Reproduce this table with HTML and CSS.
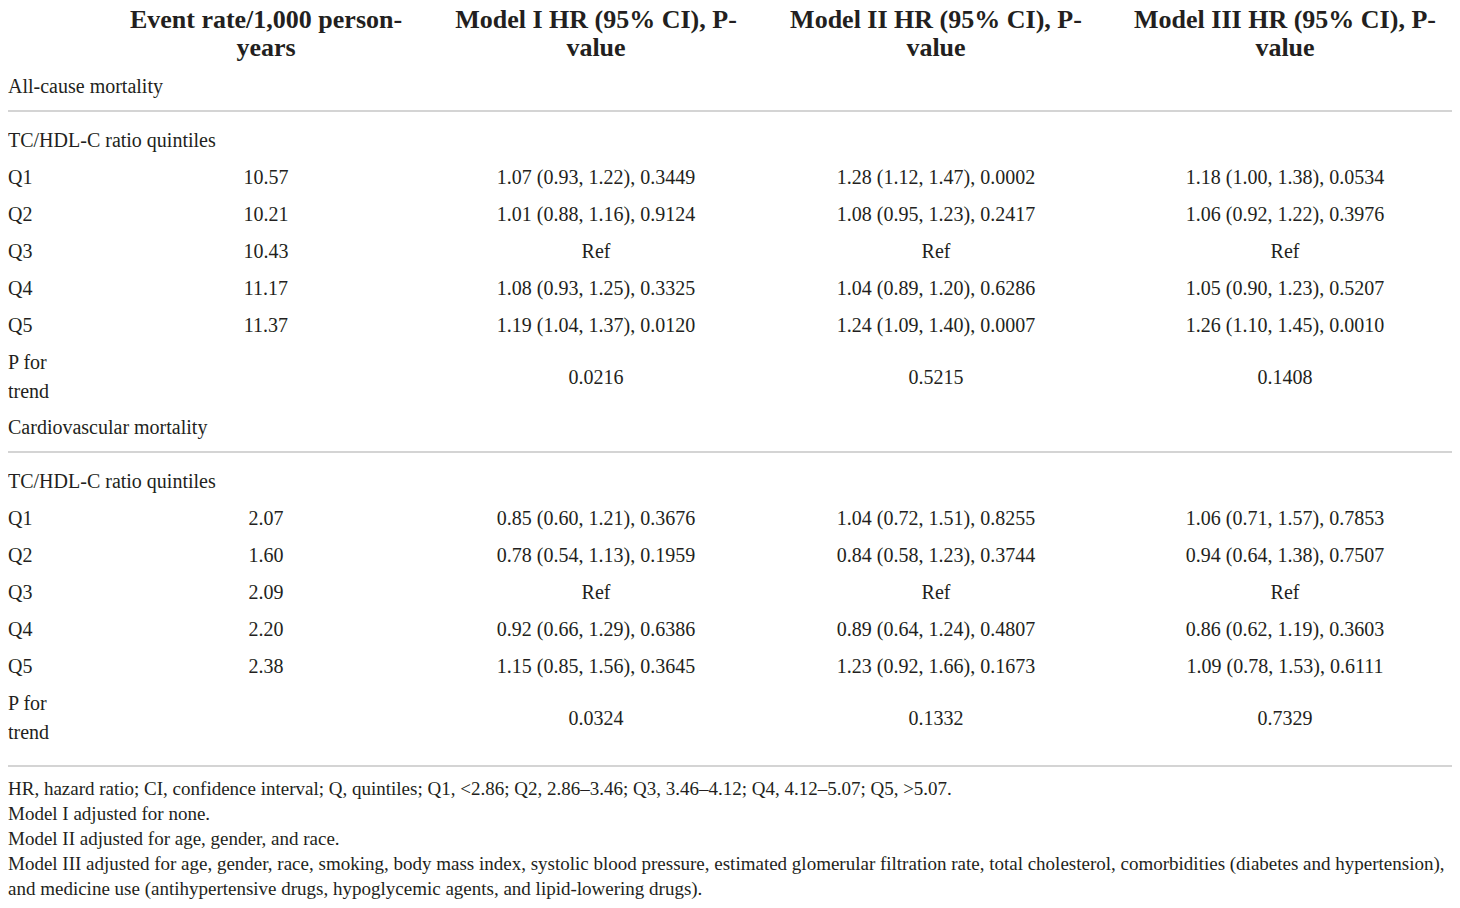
FILE: index.html
```
<!DOCTYPE html>
<html lang="en">
<head>
  <meta charset="UTF-8">
  <title>TC/HDL-C ratio quintiles and mortality</title>
  <link rel="stylesheet" href="styles.css">
</head>
<body>
  <table class="results">
    <colgroup>
      <col class="c-label">
      <col class="c-rate">
      <col class="c-m1">
      <col class="c-m2">
      <col class="c-m3">
    </colgroup>
    <thead>
      <tr>
        <th></th>
        <th>Event rate/1,000 person-years</th>
        <th>Model I HR (95% CI), P-value</th>
        <th>Model II HR (95% CI), P-value</th>
        <th>Model III HR (95% CI), P-value</th>
      </tr>
    </thead>
    <tbody>
      <tr class="section"><td colspan="5">All-cause mortality</td></tr>
      <tr class="subhead"><td colspan="5">TC/HDL-C ratio quintiles</td></tr>
      <tr><td>Q1</td><td>10.57</td><td>1.07 (0.93, 1.22), 0.3449</td><td>1.28 (1.12, 1.47), 0.0002</td><td>1.18 (1.00, 1.38), 0.0534</td></tr>
      <tr><td>Q2</td><td>10.21</td><td>1.01 (0.88, 1.16), 0.9124</td><td>1.08 (0.95, 1.23), 0.2417</td><td>1.06 (0.92, 1.22), 0.3976</td></tr>
      <tr><td>Q3</td><td>10.43</td><td>Ref</td><td>Ref</td><td>Ref</td></tr>
      <tr><td>Q4</td><td>11.17</td><td>1.08 (0.93, 1.25), 0.3325</td><td>1.04 (0.89, 1.20), 0.6286</td><td>1.05 (0.90, 1.23), 0.5207</td></tr>
      <tr><td>Q5</td><td>11.37</td><td>1.19 (1.04, 1.37), 0.0120</td><td>1.24 (1.09, 1.40), 0.0007</td><td>1.26 (1.10, 1.45), 0.0010</td></tr>
      <tr class="trend"><td>P for trend</td><td></td><td>0.0216</td><td>0.5215</td><td>0.1408</td></tr>

      <tr class="section"><td colspan="5">Cardiovascular mortality</td></tr>
      <tr class="subhead"><td colspan="5">TC/HDL-C ratio quintiles</td></tr>
      <tr><td>Q1</td><td>2.07</td><td>0.85 (0.60, 1.21), 0.3676</td><td>1.04 (0.72, 1.51), 0.8255</td><td>1.06 (0.71, 1.57), 0.7853</td></tr>
      <tr><td>Q2</td><td>1.60</td><td>0.78 (0.54, 1.13), 0.1959</td><td>0.84 (0.58, 1.23), 0.3744</td><td>0.94 (0.64, 1.38), 0.7507</td></tr>
      <tr><td>Q3</td><td>2.09</td><td>Ref</td><td>Ref</td><td>Ref</td></tr>
      <tr><td>Q4</td><td>2.20</td><td>0.92 (0.66, 1.29), 0.6386</td><td>0.89 (0.64, 1.24), 0.4807</td><td>0.86 (0.62, 1.19), 0.3603</td></tr>
      <tr><td>Q5</td><td>2.38</td><td>1.15 (0.85, 1.56), 0.3645</td><td>1.23 (0.92, 1.66), 0.1673</td><td>1.09 (0.78, 1.53), 0.6111</td></tr>
      <tr class="trend last"><td>P for trend</td><td></td><td>0.0324</td><td>0.1332</td><td>0.7329</td></tr>
    </tbody>
  </table>

  <div class="notes">
    <p>HR, hazard ratio; CI, confidence interval; Q, quintiles; Q1, &lt;2.86; Q2, 2.86–3.46; Q3, 3.46–4.12; Q4, 4.12–5.07; Q5, &gt;5.07.</p>
    <p>Model I adjusted for none.</p>
    <p>Model II adjusted for age, gender, and race.</p>
    <p>Model III adjusted for age, gender, race, smoking, body mass index, systolic blood pressure, estimated glomerular filtration rate, total cholesterol, comorbidities (diabetes and hypertension), and medicine use (antihypertensive drugs, hypoglycemic agents, and lipid-lowering drugs).</p>
  </div>
</body>
</html>
```

FILE: styles.css
```
body {
  font-family: "Liberation Serif", "Times New Roman", serif;
  color: #231f20;
  background: #fff;
  margin: 6px 8px 0;
}
.results {
  width: 100%;
  table-layout: fixed;
  border-collapse: collapse;
  font-size: 20px;
}
.c-label { width: 86px; }
.c-rate { width: 344px; }
.c-m1 { width: 316px; }
.c-m2 { width: 364px; }
.c-m3 { width: 334px; }
th {
  font-size: 26px;
  font-weight: bold;
  line-height: 28px;
  text-align: center;
  padding: 0 12px 6px;
}
td {
  line-height: 29px;
  padding: 4px 0;
  text-align: center;
  vertical-align: middle;
}
td:first-child {
  text-align: left;
  padding-right: 12px;
}
.section td {
  padding: 4px 0 9px;
  border-bottom: 2px solid #d4d4d4;
}
.subhead td {
  padding: 14px 0 4px;
}
.trend td {
  padding-bottom: 3px;
}
.trend.last td {
  padding-bottom: 18px;
  border-bottom: 2px solid #d4d4d4;
}
.notes {
  padding-top: 9px;
  font-size: 19px;
  line-height: 25px;
}
.notes p {
  margin: 0;
}
```
